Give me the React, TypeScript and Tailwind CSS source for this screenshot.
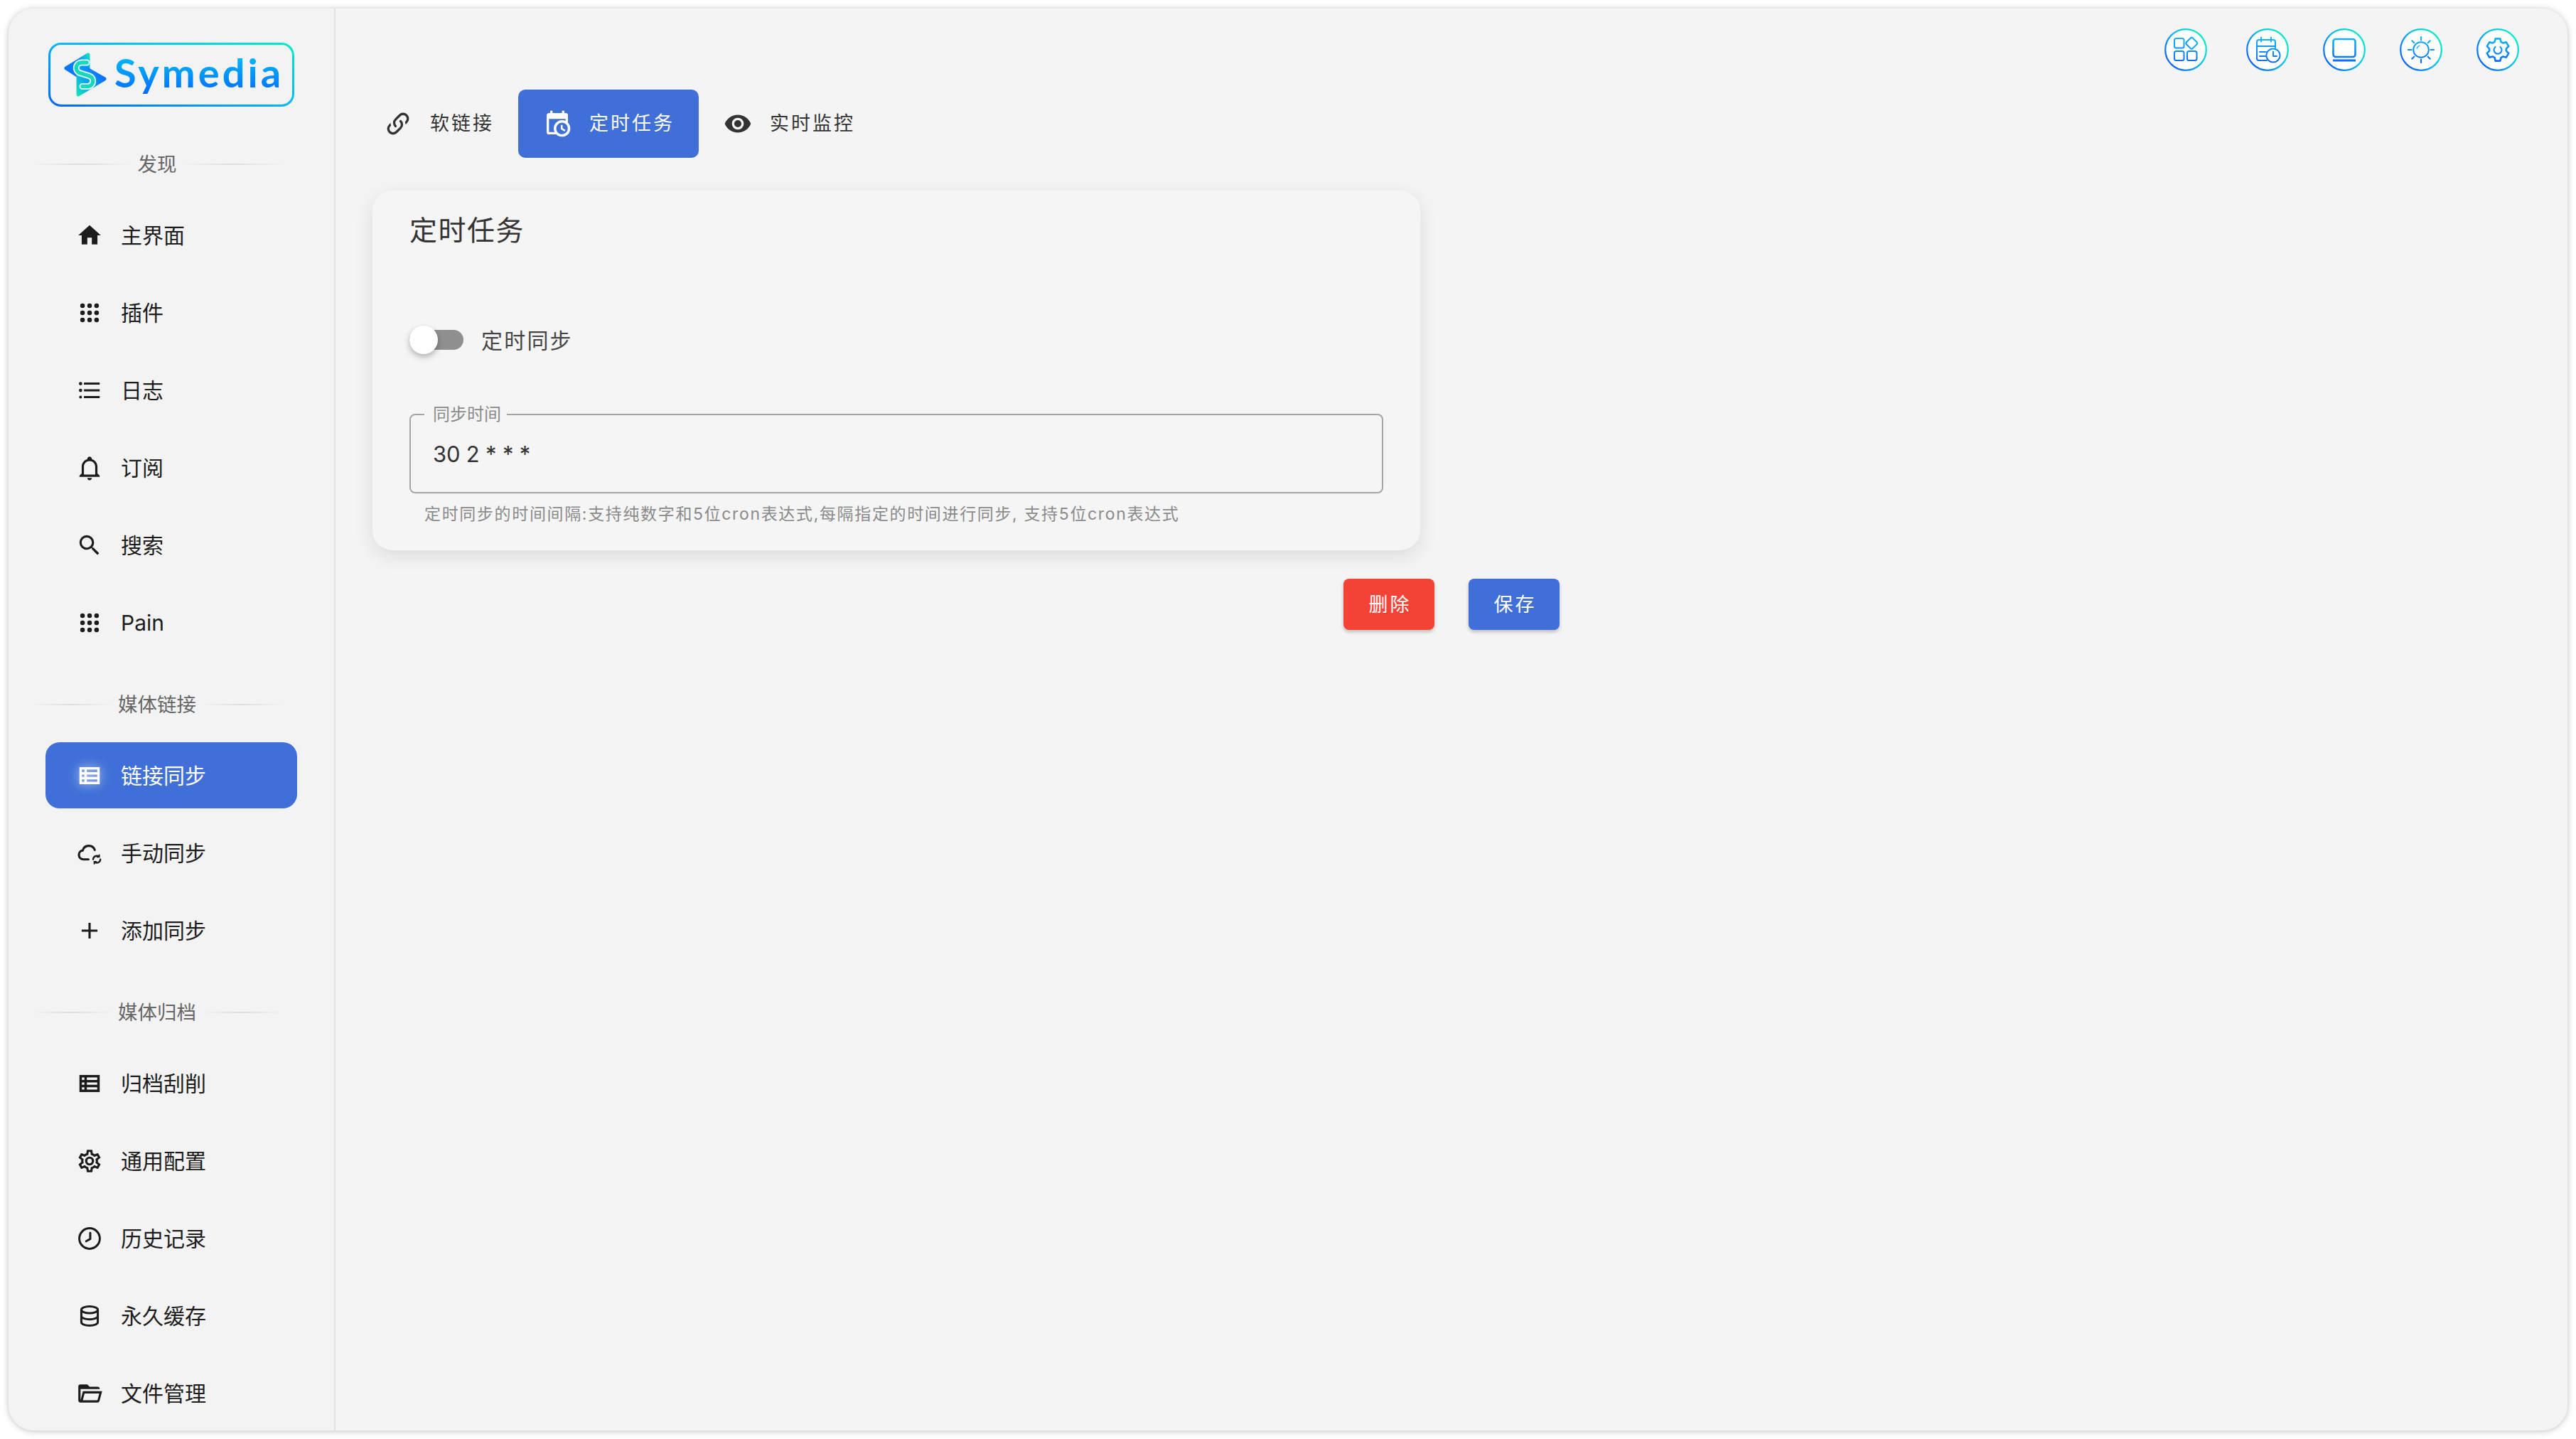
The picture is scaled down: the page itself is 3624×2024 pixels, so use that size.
import React from "react";

const P: Record<string, string> = {
  home: "M10 20v-6h4v6h5v-8h3L12 3 2 12h3v8z",
  list: "M7 5h14v2H7V5m0 8v-2h14v2H7M4 4.5A1.5 1.5 0 0 1 5.5 6 1.5 1.5 0 0 1 4 7.5 1.5 1.5 0 0 1 2.5 6 1.5 1.5 0 0 1 4 4.5m0 6A1.5 1.5 0 0 1 5.5 12 1.5 1.5 0 0 1 4 13.5 1.5 1.5 0 0 1 2.5 12 1.5 1.5 0 0 1 4 10.5M7 19v-2h14v2H7m-3-2.25a1.25 1.25 0 0 1 1.25 1.25A1.25 1.25 0 0 1 4 19.25 1.25 1.25 0 0 1 2.75 18 1.25 1.25 0 0 1 4 16.75z",
  bell: "M10 21h4c0 1.1-.9 2-2 2s-2-.9-2-2m11-2v1H3v-1l2-2v-6c0-3.1 2-5.8 5-6.7V4c0-1.1.9-2 2-2s2 .9 2 2v.3c3 .9 5 3.6 5 6.7v6l2 2m-4-8c0-2.8-2.2-5-5-5s-5 2.2-5 5v7h10v-7z",
  search: "M9.5 3A6.5 6.5 0 0 1 16 9.5c0 1.61-.59 3.09-1.56 4.23l.27.27h.79l5 5-1.5 1.5-5-5v-.79l-.27-.27A6.516 6.516 0 0 1 9.5 16 6.5 6.5 0 0 1 3 9.5 6.5 6.5 0 0 1 9.5 3m0 2C7 5 5 7 5 9.5S7 14 9.5 14 14 12 14 9.5 12 5 9.5 5z",
  plus: "M19 13h-6v6h-2v-6H5v-2h6V5h2v6h6v2z",
  cog: "M12 8a4 4 0 0 1 4 4 4 4 0 0 1-4 4 4 4 0 0 1-4-4 4 4 0 0 1 4-4m0 2a2 2 0 0 0-2 2 2 2 0 0 0 2 2 2 2 0 0 0 2-2 2 2 0 0 0-2-2m-2 12c-.25 0-.46-.18-.5-.42l-.37-2.65c-.63-.25-1.17-.59-1.69-.99l-2.49 1.01c-.22.08-.49 0-.61-.22l-2-3.46a.493.493 0 0 1 .12-.64l2.11-1.66L4.5 12l.07-1-2.11-1.63a.493.493 0 0 1-.12-.64l2-3.46c.12-.22.39-.31.61-.22l2.49 1c.52-.39 1.06-.73 1.69-.98l.37-2.65c.04-.24.25-.42.5-.42h4c.25 0 .46.18.5.42l.37 2.65c.63.25 1.17.59 1.69.98l2.49-1c.22-.09.49 0 .61.22l2 3.46c.13.22.07.49-.12.64L19.43 11l.07 1-.07 1 2.11 1.63c.19.15.25.42.12.64l-2 3.46c-.12.22-.39.31-.61.22l-2.49-1c-.52.39-1.06.73-1.69.98l-.37 2.65c-.04.24-.25.42-.5.42h-4m1.25-18l-.37 2.61c-1.2.25-2.26.89-3.03 1.78L5.44 7.35l-.75 1.3L6.8 10.2a5.55 5.55 0 0 0 0 3.6l-2.12 1.56.75 1.3 2.43-1.04c.77.88 1.82 1.52 3.01 1.76l.37 2.62h1.52l.37-2.61c1.19-.25 2.24-.89 3.01-1.77l2.43 1.04.75-1.3-2.12-1.55c.4-1.17.4-2.44 0-3.61l2.11-1.55-.75-1.3-2.41 1.04a5.42 5.42 0 0 0-3.03-1.77L12.75 4h-1.5z",
  folder: "M6.1 10L4 18V8h17a2 2 0 0 0-2-2h-7L10 4H4a2 2 0 0 0-2 2v12a2 2 0 0 0 2 2h15c.9 0 1.7-.6 1.9-1.5l2.3-8.5H6.1M19 18H6l1.6-6h13L19 18z",
  link: "M10.59 13.41c.41.39.41 1.03 0 1.42-.39.39-1.03.39-1.42 0a5.003 5.003 0 0 1 0-7.07l3.54-3.54a5.003 5.003 0 0 1 7.07 0 5.003 5.003 0 0 1 0 7.07l-1.49 1.49c.01-.82-.12-1.64-.4-2.42l.47-.48a2.982 2.982 0 0 0 0-4.24 2.982 2.982 0 0 0-4.24 0l-3.53 3.53a2.982 2.982 0 0 0 0 4.24m2.82-4.24c.39-.39 1.03-.39 1.42 0a5.003 5.003 0 0 1 0 7.07l-3.54 3.54a5.003 5.003 0 0 1-7.07 0 5.003 5.003 0 0 1 0-7.07l1.49-1.49c-.01.82.12 1.64.4 2.43l-.47.47a2.982 2.982 0 0 0 0 4.24 2.982 2.982 0 0 0 4.24 0l3.53-3.53a2.982 2.982 0 0 0 0-4.24.973.973 0 0 1 0-1.42z",
  calclock: "M15 13h1.5v2.82l2.44 1.41-.75 1.3L15 16.69V13m4-5H5v11h4.67c-.43-.91-.67-1.93-.67-3a7 7 0 0 1 7-7c1.07 0 2.09.24 3 .67V8M5 21a2 2 0 0 1-2-2V5c0-1.11.89-2 2-2h1V1h2v2h8V1h2v2h1a2 2 0 0 1 2 2v6.1c1.24 1.26 2 2.99 2 4.9a7 7 0 0 1-7 7c-1.91 0-3.64-.76-4.9-2H5m11-9.85A4.85 4.85 0 0 0 11.15 16c0 2.68 2.17 4.85 4.85 4.85A4.85 4.85 0 0 0 20.85 16c0-2.68-2.17-4.85-4.85-4.85z",
  eye: "M12 9a3 3 0 0 0-3 3 3 3 0 0 0 3 3 3 3 0 0 0 3-3 3 3 0 0 0-3-3m0 8a5 5 0 0 1-5-5 5 5 0 0 1 5-5 5 5 0 0 1 5 5 5 5 0 0 1-5 5m0-12.5C7 4.5 2.73 7.61 1 12c1.73 4.39 6 7.5 11 7.5s9.27-3.11 11-7.5c-1.73-4.39-6-7.5-11-7.5z",
};

function Mdi({ name, className }: { name: string; className?: string }) {
  return (
    <svg viewBox="0 0 24 24" fill="currentColor" className={className}>
      <path d={P[name]} />
    </svg>
  );
}

function Dots() {
  const c = [5.75, 12, 18.25];
  return (
    <svg viewBox="0 0 24 24" fill="currentColor" className="w-[38px] h-[38px]">
      {c.map((x) => c.map((y) => <circle key={`${x}-${y}`} cx={x} cy={y} r="2.05" />))}
    </svg>
  );
}

function TableIcon() {
  return (
    <svg viewBox="0 0 24 24" fill="none" stroke="currentColor" strokeWidth="2.2" className="w-[38px] h-[38px]">
      <rect x="4.100" y="5.500" width="15.800" height="13" />
      <path d="M4 10h16M4 14.200h16M8.500 5.500v13" />
    </svg>
  );
}

function CloudSync() {
  return (
    <svg viewBox="0 0 24 24" fill="none" stroke="currentColor" strokeWidth="2" strokeLinecap="round" className="w-[38px] h-[38px]">
      <path d="M11 17.500H6.500a4 4 0 0 1-.6-7.950A5.600 5.600 0 0 1 16.600 9.200" />
      <path d="M15.200 17.500a3.200 3.200 0 0 1 4.900-2.600M21.600 17.500a3.200 3.200 0 0 1-4.900 2.600" strokeWidth="1.500" />
      <path d="M20.600 13.600v1.800h-1.800M16.200 21.400v-1.800H18" strokeWidth="1.200" />
    </svg>
  );
}

function ClockIcon() {
  return (
    <svg viewBox="0 0 24 24" fill="none" stroke="currentColor" strokeWidth="1.900" strokeLinecap="round" strokeLinejoin="round" className="w-[38px] h-[38px]">
      <circle cx="12" cy="12" r="9.100" />
      <path d="M12.600 7v5.400L9 14.400" />
    </svg>
  );
}

function DbIcon() {
  return (
    <svg viewBox="0 0 24 24" fill="none" stroke="currentColor" strokeWidth="1.900" className="w-[38px] h-[38px]">
      <ellipse cx="12" cy="6.500" rx="7.300" ry="3" />
      <path d="M4.700 6.500v11c0 1.700 3.300 3 7.300 3s7.300-1.300 7.300-3v-11M4.700 12c0 1.700 3.300 3 7.300 3s7.300-1.300 7.300-3" />
    </svg>
  );
}

function gearPath() {
  const cx = 30;
  const cy = 30;
  const pts: string[] = [];
  for (let k = 0; k < 6; k++) {
    const t = k * 60 - 90;
    const pt = (deg: number, r: number) => {
      const a = (deg * Math.PI) / 180;
      return `${(cx + r * Math.cos(a)).toFixed(2)} ${(cy + r * Math.sin(a)).toFixed(2)}`;
    };
    pts.push(pt(t - 22, 12));
    pts.push(pt(t - 12, 16));
    pts.push(pt(t + 12, 16));
    pts.push(pt(t + 22, 12));
  }
  return "M" + pts.join("L") + "Z";
}

function Ring({ children }: { children: React.ReactNode }) {
  return (
    <svg viewBox="0 0 60 60" className="w-[60px] h-[60px] shrink-0" fill="none" strokeLinecap="round" strokeLinejoin="round">
      <defs>
        <linearGradient id="ringG" gradientUnits="userSpaceOnUse" x1="6" y1="48" x2="54" y2="12">
          <stop offset="0" stopColor="#0a66ff" />
          <stop offset="0.5" stopColor="#0fb4f5" />
          <stop offset="1" stopColor="#00ecc4" />
        </linearGradient>
        <linearGradient id="iconG" gradientUnits="userSpaceOnUse" x1="30" y1="12" x2="30" y2="48">
          <stop offset="0" stopColor="#14b8f7" />
          <stop offset="1" stopColor="#0a6aff" />
        </linearGradient>
      </defs>
      <circle cx="30" cy="30" r="28.800" fill="#fff" stroke="url(#ringG)" strokeWidth="2.200" />
      <g stroke="url(#iconG)" strokeWidth="2">{children}</g>
    </svg>
  );
}

function TopIcons() {
  return (
    <div className="flex justify-end items-center pt-[28px] pr-[68px] gap-[48px] h-[88px]">
      <div className="mr-[7px]">
        <Ring>
          <rect x="14" y="14" width="13.500" height="13.500" rx="2.500" />
          <rect x="32" y="14.500" width="12.500" height="12.500" rx="2.500" transform="rotate(45 38.200 20.800)" />
          <rect x="14" y="32" width="13.500" height="13" rx="2.500" />
          <rect x="32" y="32" width="13.500" height="13" rx="2.500" />
        </Ring>
      </div>
      <Ring>
        <path d="M41 27V19a3 3 0 0 0-3-3H18a3 3 0 0 0-3 3v23a3 3 0 0 0 3 3h11" />
        <path d="M21 12.500v6M35 12.500v6M15 25h26M19 33h9M19 39h8" />
        <circle cx="38" cy="38" r="9.600" fill="#fff" />
        <path d="M38 32.500V39h5" />
      </Ring>
      <Ring>
        <rect x="14.500" y="15" width="31" height="25" rx="3.500" strokeWidth="2.600" />
        <path d="M14 45h32" strokeWidth="3" strokeLinecap="butt" />
      </Ring>
      <Ring>
        <circle cx="30" cy="30" r="10.800" />
        <path d="M24 28a6.500 6.500 0 0 1 4-4" strokeWidth="1.200" />
        <path d="M30 12v4.500M30 43.500V48M12 30h4.500M43.500 30H48M17.300 17.300l3 3M39.700 39.700l3 3M42.700 17.300l-3 3M20.300 39.700l-3 3" strokeWidth="2.200" />
      </Ring>
      <Ring>
        <path d={gearPath()} strokeWidth="2.600" />
        <path d="M26.500 26a5.500 5.500 0 1 0 7 0" strokeWidth="2.200" />
      </Ring>
    </div>
  );
}

function Logo() {
  return (
    <div className="ml-[56px] w-[346px] h-[90px] p-[3px] rounded-[18px] bg-linear-to-tr from-[#0a62ff] via-[#0fb4f5] to-[#00ecc4]">
      <div className="w-full h-full rounded-[15px] bg-[#f3f3f3] flex items-center pl-[19px]">
        <svg viewBox="0 0 60 62" className="w-[60px] h-[62px] shrink-0">
          <defs>
            <linearGradient id="lgA" x1="0" y1="1" x2="1" y2="0">
              <stop offset="0" stopColor="#0a62ff" />
              <stop offset="0.7" stopColor="#0a8dfa" />
              <stop offset="1" stopColor="#14dcc8" />
            </linearGradient>
            <linearGradient id="lgB" x1="0" y1="1" x2="1" y2="0.2">
              <stop offset="0" stopColor="#12e0bd" />
              <stop offset="0.45" stopColor="#0a9df5" />
              <stop offset="1" stopColor="#0a62ff" />
            </linearGradient>
          </defs>
          <path d="M34 3L3 22L34 42Z" fill="url(#lgA)" stroke="url(#lgA)" strokeWidth="5" strokeLinejoin="round" />
          <path d="M20 16L57 37L20 59Z" fill="url(#lgB)" stroke="url(#lgB)" strokeWidth="5" strokeLinejoin="round" />
          <path d="M32 14H25A7.500 7.500 0 0 0 22 28.500L36 33A7.500 7.500 0 0 1 33 47.500H26" fill="none" stroke="#eafcfb" strokeWidth="9" strokeLinecap="round" />
          <path d="M32 14H25A7.500 7.500 0 0 0 22 28.500L36 33A7.500 7.500 0 0 1 33 47.500H26" fill="none" stroke="#16d8bd" strokeWidth="5.500" strokeLinecap="round" />
        </svg>
        <span className="ml-[11px] text-[56px] leading-none font-bold tracking-[4px] pb-[6px] text-transparent bg-clip-text bg-linear-to-b from-[#12c0f5] to-[#0a62ff] font-[Lato,Inter,sans-serif]">
          Symedia
        </span>
      </div>
    </div>
  );
}

function Section({ label, first }: { label: string; first?: boolean }) {
  return (
    <div className={`ml-[33px] w-[352px] h-[40px] mb-[33px] flex items-center ${first ? "mt-[61px]" : "mt-[49px]"}`}>
      <div className="flex-1 h-[2px] bg-linear-to-r from-transparent via-[#dcdcdc] to-transparent" />
      <span className="px-[9px] pt-[2px] text-[27.500px] leading-none text-[#666]">{label}</span>
      <div className="flex-1 h-[2px] bg-linear-to-r from-transparent via-[#dcdcdc] to-transparent" />
    </div>
  );
}

function Item({ icon, label, active }: { icon: React.ReactNode; label: string; active?: boolean }) {
  return (
    <div
      className={`ml-[52px] w-[354px] h-[93px] mb-[16px] rounded-[20px] flex items-center pl-[43px] ${
        active ? "bg-[#3f6fd7] text-white" : "text-[#1c1c1c]"
      }`}
    >
      <span className={`w-[38px] h-[38px] mr-[26px] shrink-0 flex items-center justify-center ${active ? "drop-shadow-[0_0_8px_rgba(255,255,255,0.7)]" : ""}`}>
        {icon}
      </span>
      <span className="text-[30px] leading-none pt-[1px] -ml-[1px]">{label}</span>
    </div>
  );
}

const big = "w-[38px] h-[38px]";

function Sidebar() {
  return (
    <aside className="w-[460px] shrink-0 border-r-2 border-[#e2e2e2] bg-[#f3f3f3] pt-[48px] overflow-hidden">
      <Logo />
      <Section label="发现" first />
      <Item icon={<Mdi name="home" className="w-[40px] h-[40px]" />} label="主界面" />
      <Item icon={<Dots />} label="插件" />
      <Item icon={<Mdi name="list" className={big} />} label="日志" />
      <Item icon={<Mdi name="bell" className={big} />} label="订阅" />
      <Item icon={<Mdi name="search" className={big} />} label="搜索" />
      <Item icon={<Dots />} label="Pain" />
      <Section label="媒体链接" />
      <Item active icon={<TableIcon />} label="链接同步" />
      <Item icon={<CloudSync />} label="手动同步" />
      <Item icon={<Mdi name="plus" className={big} />} label="添加同步" />
      <Section label="媒体归档" />
      <Item icon={<TableIcon />} label="归档刮削" />
      <Item icon={<Mdi name="cog" className={big} />} label="通用配置" />
      <Item icon={<ClockIcon />} label="历史记录" />
      <Item icon={<DbIcon />} label="永久缓存" />
      <Item icon={<Mdi name="folder" className={big} />} label="文件管理" />
    </aside>
  );
}

function Tab({ icon, label, active }: { icon: string; label: string; active?: boolean }) {
  return (
    <div
      className={`h-[96px] rounded-[10px] flex items-center pl-[35px] pr-[34px] ${
        active ? "bg-[#3f6fd7] text-white" : "text-[#333]"
      }`}
    >
      <Mdi name={icon} className="w-[40px] h-[40px] mr-[25px] shrink-0" />
      <span className="text-[27px] leading-none tracking-[3px] pb-[2px]">{label}</span>
    </div>
  );
}

function Main() {
  return (
    <main className="flex-1 min-w-0 bg-[#f4f4f4]">
      <TopIcons />
      <div className="flex mt-[26px] ml-[33px]">
        <Tab icon="link" label="软链接" />
        <Tab icon="calclock" label="定时任务" active />
        <Tab icon="eye" label="实时监控" />
      </div>
      <div className="ml-[52px] mt-[46px] w-[1474px] h-[506px] rounded-[28px] bg-[#f5f5f5] px-[52px] pt-[29px] shadow-[0_8px_28px_rgba(0,0,0,0.10)]">
        <div className="h-[52px] flex items-center text-[39px] leading-none tracking-[1.500px] text-[#333]">定时任务</div>
        <div className="mt-[109px] h-[40px] flex items-center">
          <div className="relative w-[76px] h-[28px] rounded-full bg-[#8f8f8f]">
            <div className="absolute left-0 -top-[6px] w-[40px] h-[40px] rounded-full bg-white shadow-[0_4px_8px_rgba(0,0,0,0.28)]" />
          </div>
          <span className="ml-[25px] text-[30px] leading-none tracking-[2.200px] text-[#444] pt-[1px]">定时同步</span>
        </div>
        <div className="relative mt-[84px] h-[112px] w-[1370px] rounded-[8px] border-2 border-[#a5a5a5] flex items-center pl-[31px]">
          <span className="absolute -top-[13px] left-[19px] pl-[12px] pr-[8px] bg-[#f5f5f5] text-[24px] leading-[24px] text-[#8a8a8a]">同步时间</span>
          <span className="text-[31px] leading-none tracking-[-0.2px] text-[#333]">30 2 * * *</span>
        </div>
        <div className="mt-[15px] h-[28px] pl-[21px] flex items-center text-[23px] leading-none tracking-[1.650px] text-[#8a8a8a] whitespace-nowrap">
          定时同步的时间间隔:支持纯数字和5位cron表达式,每隔指定的时间进行同步, 支持5位cron表达式
        </div>
      </div>
      <div className="mt-[40px] w-[1722px] flex justify-end gap-[48px]">
        <button className="w-[128px] h-[72px] pt-[2px] pl-[3px] rounded-[8px] bg-[#f44336] text-white text-[27px] tracking-[3px] shadow-[0_3px_5px_rgba(0,0,0,0.22)]">删除</button>
        <button className="w-[128px] h-[72px] pt-[2px] pl-[3px] rounded-[8px] bg-[#3f6fd7] text-white text-[27px] tracking-[3px] shadow-[0_3px_5px_rgba(0,0,0,0.22)]">保存</button>
      </div>
    </main>
  );
}

export default function App() {
  return (
    <div className="w-[3624px] h-[2024px] bg-white p-[12px] overflow-hidden font-[Inter,'Noto_Sans_CJK_SC',sans-serif]">
      <div className="w-[3600px] h-[2000px] rounded-[36px] overflow-hidden flex bg-[#f4f4f4] shadow-[0_1px_10px_rgba(0,0,0,0.25)]">
        <Sidebar />
        <Main />
      </div>
    </div>
  );
}
